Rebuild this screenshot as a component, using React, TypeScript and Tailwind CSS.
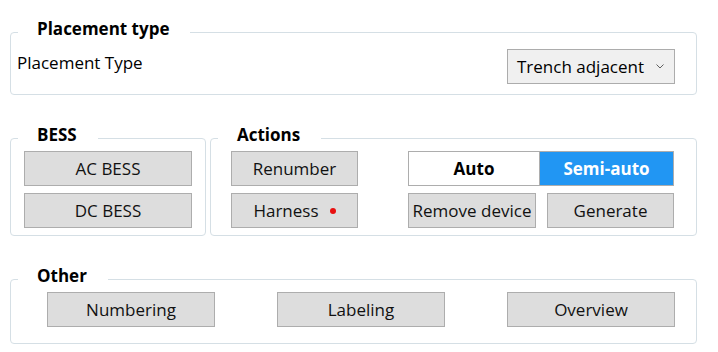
import React from "react";

const font = { fontFamily: '"Open Sans", "Noto Sans", sans-serif' };

const btn =
  "flex h-[35px] items-center justify-center border border-[#adadad] bg-[#dddddd] text-[17px] text-[#111]";

interface GroupProps {
  title: string;
  className?: string;
  children: React.ReactNode;
}

const Group: React.FC<GroupProps> = ({ title, className, children }) => {
  return (
    <fieldset className={`rounded-[4px] border border-[#d5dfe5] p-0 ${className ?? ""}`}>
      <legend className="ml-[7px] pl-[19px] pr-[21px] pb-[6px] text-[17px] font-bold leading-[20px] text-black">
        {title}
      </legend>
      {children}
    </fieldset>
  );
};

const App: React.FC = () => {
  return (
    <div className="h-[352px] w-[718px] bg-white pl-[10px] pt-[19px] text-black" style={font}>
      <Group title="Placement type" className="w-[687px]">
        <div className="flex items-start justify-between pb-[10px] pl-[6px] pr-[21px] pt-[4px]">
          <span className="mt-[3px] text-[17px] leading-[22px]">Placement Type</span>
          <button className="flex h-[35px] w-[168px] items-center justify-between border border-[#acacac] bg-[#f0f0f0] pl-[9px] pr-[10px] text-[17px]">
            <span>Trench adjacent</span>
            <svg width="8" height="5" viewBox="0 0 8 5">
              <polyline points="0.5,0.5 4,4 7.5,0.5" fill="none" stroke="#606060" strokeWidth="1" />
            </svg>
          </button>
        </div>
      </Group>

      <div className="mt-[30px] flex gap-[4px]">
        <Group title="BESS" className="w-[196px]">
          <div className="flex flex-col gap-[7px] pb-[7px] pl-[13px] pr-[12px]">
            <button className={`${btn} w-[168px]`}>AC BESS</button>
            <button className={`${btn} w-[168px]`}>DC BESS</button>
          </div>
        </Group>

        <Group title="Actions" className="w-[487px]">
          <div className="flex gap-[50px] pb-[7px] pl-[20px] pr-[21px]">
            <div className="flex w-[127px] flex-col gap-[7px]">
              <button className={btn}>Renumber</button>
              <button className={btn}>
                Harness
                <span className="ml-[11px] h-[6px] w-[6px] rounded-full bg-[#e81010]" />
              </button>
            </div>
            <div className="flex w-[266px] flex-col gap-[7px]">
              <div className="flex h-[35px]">
                <button className="w-[132px] border border-[#adadad] bg-white text-[17px] font-bold">
                  Auto
                </button>
                <button className="w-[134px] border border-l-0 border-[#adadad] bg-[#2196f3] text-[17px] font-bold text-white">
                  Semi-auto
                </button>
              </div>
              <div className="flex gap-[11px]">
                <button className={`${btn} w-[128px]`}>Remove device</button>
                <button className={`${btn} w-[127px]`}>Generate</button>
              </div>
            </div>
          </div>
        </Group>
      </div>

      <Group title="Other" className="mt-[30px] w-[687px]">
        <div className="flex justify-between pb-[16px] pl-[36px] pr-[21px]">
          <button className={`${btn} w-[168px]`}>Numbering</button>
          <button className={`${btn} w-[168px]`}>Labeling</button>
          <button className={`${btn} w-[168px]`}>Overview</button>
        </div>
      </Group>
    </div>
  );
};

export default App;
